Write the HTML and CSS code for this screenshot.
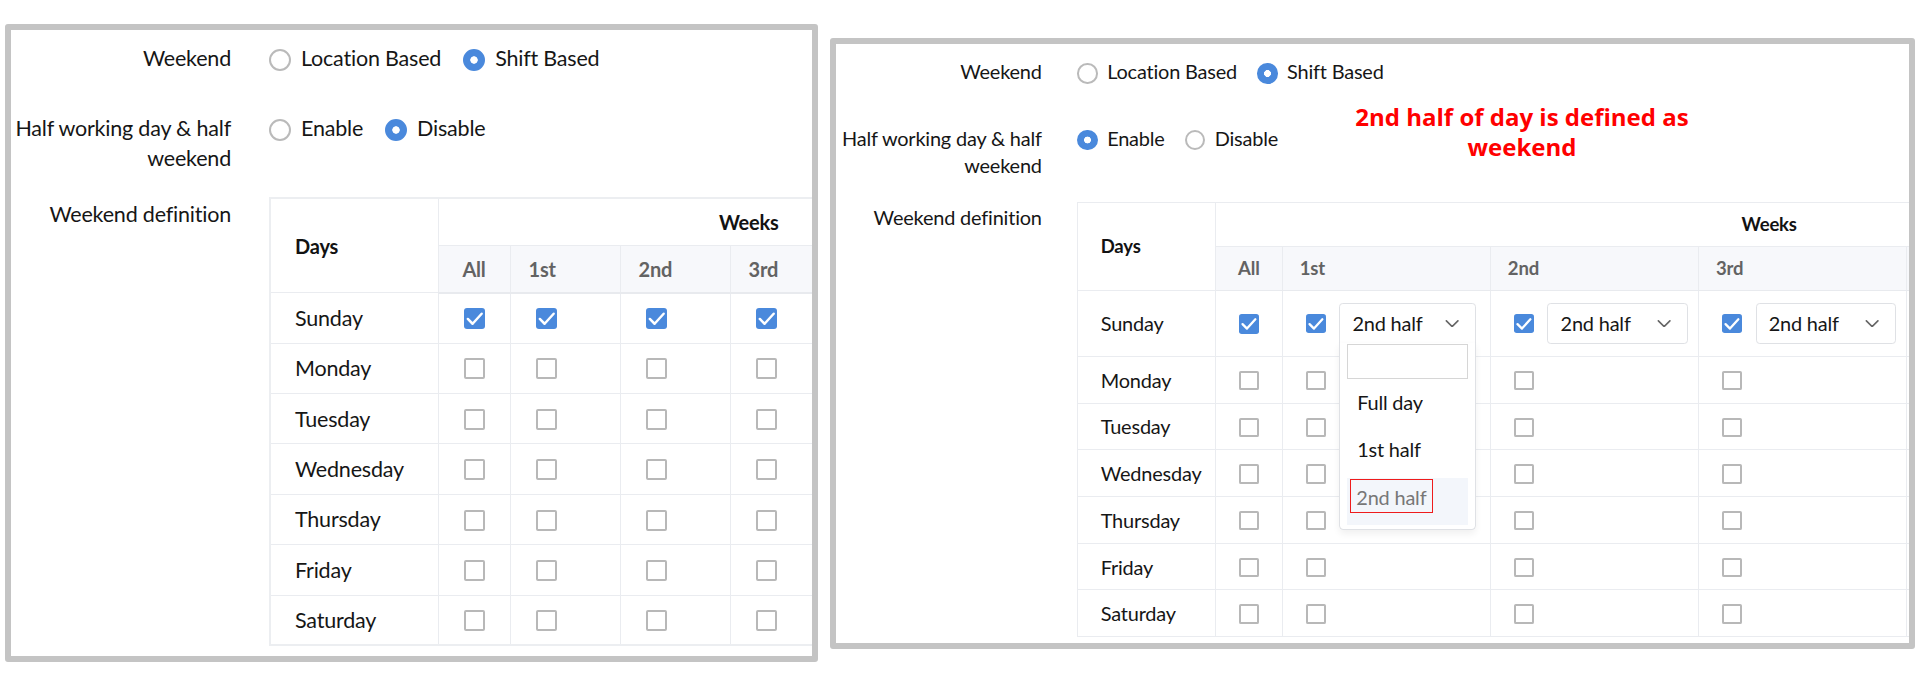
FILE: index.html
```html
<!DOCTYPE html>
<html lang="en">
<head>
<meta charset="utf-8">
<title>Weekend definition</title>
<link rel="stylesheet" href="styles.css">
</head>
<body>
<div class="stage">

  <section class="panel panel-a">
    <div class="content">
      <div class="form-row row-first">
        <div class="label">Weekend</div>
        <div class="field radios">
          <span class="radio"><span class="dot"></span>Location Based</span>
          <span class="radio on"><span class="dot"></span>Shift Based</span>
        </div>
      </div>
      <div class="form-row row-second">
        <div class="label">Half working day &amp; half weekend</div>
        <div class="field radios">
          <span class="radio"><span class="dot"></span>Enable</span>
          <span class="radio on"><span class="dot"></span>Disable</span>
        </div>
      </div>
      <div class="form-row row-third">
        <div class="label label-top">Weekend definition</div>
        <div class="field">
          <table class="grid">
            <colgroup><col class="c-day"><col class="c-all"><col class="c-wk" span="5"></colgroup>
            <thead>
              <tr class="h1"><th rowspan="2" class="days">Days</th><th colspan="6" class="weeks">Weeks</th></tr>
              <tr class="h2"><th class="all">All</th><th>1st</th><th>2nd</th><th>3rd</th><th>4th</th><th>5th</th></tr>
            </thead>
            <tbody>
              <tr><td class="day">Sunday</td>
                <td class="all"><span class="cb on"><svg viewBox="0 0 22 22"><path d="M4 11.5l5 5L18.5 6"/></svg></span></td>
                <td><span class="cb on"><svg viewBox="0 0 22 22"><path d="M4 11.5l5 5L18.5 6"/></svg></span></td>
                <td><span class="cb on"><svg viewBox="0 0 22 22"><path d="M4 11.5l5 5L18.5 6"/></svg></span></td>
                <td><span class="cb on"><svg viewBox="0 0 22 22"><path d="M4 11.5l5 5L18.5 6"/></svg></span></td>
                <td><span class="cb on"><svg viewBox="0 0 22 22"><path d="M4 11.5l5 5L18.5 6"/></svg></span></td>
                <td><span class="cb on"><svg viewBox="0 0 22 22"><path d="M4 11.5l5 5L18.5 6"/></svg></span></td></tr>
              <tr><td class="day">Monday</td><td class="all"><span class="cb"></span></td><td><span class="cb"></span></td><td><span class="cb"></span></td><td><span class="cb"></span></td><td><span class="cb"></span></td><td><span class="cb"></span></td></tr>
              <tr><td class="day">Tuesday</td><td class="all"><span class="cb"></span></td><td><span class="cb"></span></td><td><span class="cb"></span></td><td><span class="cb"></span></td><td><span class="cb"></span></td><td><span class="cb"></span></td></tr>
              <tr><td class="day">Wednesday</td><td class="all"><span class="cb"></span></td><td><span class="cb"></span></td><td><span class="cb"></span></td><td><span class="cb"></span></td><td><span class="cb"></span></td><td><span class="cb"></span></td></tr>
              <tr><td class="day">Thursday</td><td class="all"><span class="cb"></span></td><td><span class="cb"></span></td><td><span class="cb"></span></td><td><span class="cb"></span></td><td><span class="cb"></span></td><td><span class="cb"></span></td></tr>
              <tr><td class="day">Friday</td><td class="all"><span class="cb"></span></td><td><span class="cb"></span></td><td><span class="cb"></span></td><td><span class="cb"></span></td><td><span class="cb"></span></td><td><span class="cb"></span></td></tr>
              <tr><td class="day">Saturday</td><td class="all"><span class="cb"></span></td><td><span class="cb"></span></td><td><span class="cb"></span></td><td><span class="cb"></span></td><td><span class="cb"></span></td><td><span class="cb"></span></td></tr>
            </tbody>
          </table>
        </div>
      </div>
    </div>
  </section>

  <section class="panel panel-b">
    <div class="content">
      <div class="form-row row-first">
        <div class="label">Weekend</div>
        <div class="field radios">
          <span class="radio"><span class="dot"></span>Location Based</span>
          <span class="radio on"><span class="dot"></span>Shift Based</span>
        </div>
      </div>
      <div class="form-row row-second">
        <div class="label">Half working day &amp; half weekend</div>
        <div class="field radios">
          <span class="radio on"><span class="dot"></span>Enable</span>
          <span class="radio"><span class="dot"></span>Disable</span>
        </div>
      </div>
      <div class="form-row row-third">
        <div class="label label-top">Weekend definition</div>
        <div class="field">
          <table class="grid">
            <colgroup><col class="c-day"><col class="c-all"><col class="c-wk" span="5"></colgroup>
            <thead>
              <tr class="h1"><th rowspan="2" class="days">Days</th><th colspan="6" class="weeks">Weeks</th></tr>
              <tr class="h2"><th class="all">All</th><th>1st</th><th>2nd</th><th>3rd</th><th>4th</th><th>5th</th></tr>
            </thead>
            <tbody>
              <tr class="r-sun"><td class="day">Sunday</td>
                <td class="all"><span class="cb on"><svg viewBox="0 0 22 22"><path d="M4 11.5l5 5L18.5 6"/></svg></span></td>
                <td><div class="pick"><span class="cb on"><svg viewBox="0 0 22 22"><path d="M4 11.5l5 5L18.5 6"/></svg></span>
                  <div class="select open"><span class="val">2nd half</span><svg class="chev" viewBox="0 0 16 9"><path d="M1 1l7 7 7-7"/></svg>
                    <div class="menu">
                      <div class="search"></div>
                      <div class="opt">Full day</div>
                      <div class="opt">1st half</div>
                      <div class="opt active"><span class="mark">2nd half</span></div>
                    </div>
                  </div></div></td>
                <td><div class="pick"><span class="cb on"><svg viewBox="0 0 22 22"><path d="M4 11.5l5 5L18.5 6"/></svg></span>
                  <div class="select"><span class="val">2nd half</span><svg class="chev" viewBox="0 0 16 9"><path d="M1 1l7 7 7-7"/></svg></div></div></td>
                <td><div class="pick"><span class="cb on"><svg viewBox="0 0 22 22"><path d="M4 11.5l5 5L18.5 6"/></svg></span>
                  <div class="select"><span class="val">2nd half</span><svg class="chev" viewBox="0 0 16 9"><path d="M1 1l7 7 7-7"/></svg></div></div></td>
                <td><div class="pick"><span class="cb on"><svg viewBox="0 0 22 22"><path d="M4 11.5l5 5L18.5 6"/></svg></span>
                  <div class="select"><span class="val">2nd half</span><svg class="chev" viewBox="0 0 16 9"><path d="M1 1l7 7 7-7"/></svg></div></div></td>
                <td><div class="pick"><span class="cb on"><svg viewBox="0 0 22 22"><path d="M4 11.5l5 5L18.5 6"/></svg></span>
                  <div class="select"><span class="val">2nd half</span><svg class="chev" viewBox="0 0 16 9"><path d="M1 1l7 7 7-7"/></svg></div></div></td></tr>
              <tr><td class="day">Monday</td><td class="all"><span class="cb"></span></td><td><span class="cb"></span></td><td><span class="cb"></span></td><td><span class="cb"></span></td><td><span class="cb"></span></td><td><span class="cb"></span></td></tr>
              <tr><td class="day">Tuesday</td><td class="all"><span class="cb"></span></td><td><span class="cb"></span></td><td><span class="cb"></span></td><td><span class="cb"></span></td><td><span class="cb"></span></td><td><span class="cb"></span></td></tr>
              <tr><td class="day">Wednesday</td><td class="all"><span class="cb"></span></td><td><span class="cb"></span></td><td><span class="cb"></span></td><td><span class="cb"></span></td><td><span class="cb"></span></td><td><span class="cb"></span></td></tr>
              <tr><td class="day">Thursday</td><td class="all"><span class="cb"></span></td><td><span class="cb"></span></td><td><span class="cb"></span></td><td><span class="cb"></span></td><td><span class="cb"></span></td><td><span class="cb"></span></td></tr>
              <tr><td class="day">Friday</td><td class="all"><span class="cb"></span></td><td><span class="cb"></span></td><td><span class="cb"></span></td><td><span class="cb"></span></td><td><span class="cb"></span></td><td><span class="cb"></span></td></tr>
              <tr><td class="day">Saturday</td><td class="all"><span class="cb"></span></td><td><span class="cb"></span></td><td><span class="cb"></span></td><td><span class="cb"></span></td><td><span class="cb"></span></td><td><span class="cb"></span></td></tr>
            </tbody>
          </table>
        </div>
      </div>
    </div>
    <p class="note">2nd half of day is defined as<br>weekend</p>
  </section>

</div>
</body>
</html>
```

FILE: styles.css
```css
* { box-sizing: border-box; }

html, body {
  margin: 0;
  background: #fff;
}

body {
  font-family: Lato, "Noto Sans", sans-serif;
  color: #161616;
  letter-spacing: -0.2px;
}

.stage {
  display: flex;
  align-items: flex-start;
  width: 1920px;
  height: 684px;
  padding: 24px 0 0 5px;
}

/* ---------- framed screenshot panels ---------- */
.panel {
  position: relative;
  flex: none;
  overflow: hidden;
  background: #fff;
  border: 6px solid #c4c4c4;
  border-radius: 3px;
}

.panel-a {
  width: 813px;
  height: 638px;
}

.panel-b {
  width: 1085px;
  height: 611px;
  margin: 14px 0 0 12px;
}

.panel-a .content {
  padding-top: 13.4px;
}

.panel-b .content {
  zoom: 0.927;
  padding: 15.3px 0 0 2px;
}

/* ---------- form rows ---------- */
.form-row {
  display: flex;
  align-items: flex-start;
}

.label {
  flex: none;
  width: 220px;
  text-align: right;
  font-size: 21.5px;
  line-height: 30px;
}

.panel-b .label { line-height: 29px; }

.label-top { padding-top: 2px; }

.field {
  flex: none;
  margin-left: 38px;
}

.panel-b .field { margin-left: 38.5px; }

.row-first { margin-bottom: 40px; }
.panel-b .row-first { margin-bottom: 41.9px; }

.row-second { margin-bottom: 23.9px; }
.panel-b .row-second { margin-bottom: 25.2px; }

/* ---------- radios ---------- */
.radios {
  display: flex;
  align-items: center;
  height: 30px;
}

.radio {
  display: flex;
  align-items: center;
  margin-right: 22px;
  font-size: 21.5px;
  line-height: 30px;
}

.dot {
  flex: none;
  width: 22px;
  height: 22px;
  margin: 3px 10px 0 0;
  border: 2px solid #bababa;
  border-radius: 50%;
  background: #fff;
}

.panel-b .dot { border-width: 2.2px; }

.radio.on .dot {
  border-color: #4a89dc;
  background: radial-gradient(circle, #fff 0 3.4px, #4a89dc 4px);
}

/* ---------- table ---------- */
.grid {
  border-collapse: collapse;
  table-layout: fixed;
  width: 790px;
  border: 2px solid #eceef1;
}

.panel-b .grid { width: 1343.5px; }

.c-day { width: 168px; }
.c-all { width: 72px; }
.c-wk  { width: 110px; }

.panel-b .c-day { width: 148px; }
.panel-b .c-all { width: 72.7px; }
.panel-b .c-wk  { width: 224.5px; }

.grid th,
.grid td {
  border: 1px solid #eaecf0;
  padding: 0 0 0 18px;
  text-align: left;
  vertical-align: middle;
  white-space: nowrap;
}

.grid th {
  font-size: 20px;
  font-weight: 700;
}

.h1 th { height: 47px; }
.h2 th { height: 47.4px; }
.panel-b .h1 th { height: 47.5px; }
.panel-b .h2 th { height: 47.1px; }

.grid th.days {
  padding-left: 24px;
  color: #121212;
  background: #fff;
}

.grid th.weeks {
  padding: 0;
  text-align: center;
  color: #121212;
}

.h2 th {
  color: #636363;
  background: #f7f8fb;
  border-bottom: 2px solid #e8eaee;
}

.grid .all {
  padding: 0;
  text-align: center;
}

.grid tbody tr { height: 50.4px; }
.grid tbody tr.r-sun { height: 71.5px; }

.grid td.day {
  padding-left: 24px;
  font-size: 21.5px;
}

/* ---------- checkboxes ---------- */
.cb {
  display: inline-block;
  width: 21px;
  height: 21px;
  margin-left: 7px;
  vertical-align: middle;
  border: 2px solid #b8b8b8;
  border-radius: 2px;
  background: #fff;
}

.panel-b .cb { border-width: 2.2px; }

.grid .all .cb { margin-left: 0; }

.cb.on,
.panel-b .cb.on {
  border: 0;
  border-radius: 3px;
  background: #4a89dc;
}

.cb svg {
  display: block;
  width: 21px;
  height: 21px;
}

.cb svg path {
  fill: none;
  stroke: #fff;
  stroke-width: 2.6;
  stroke-linecap: round;
  stroke-linejoin: round;
}

/* ---------- select with dropdown ---------- */
.pick {
  display: flex;
  align-items: center;
}

.pick .cb { flex: none; }

.select {
  position: relative;
  display: flex;
  align-items: center;
  justify-content: space-between;
  width: 152px;
  height: 44.8px;
  margin-left: 14.8px;
  padding: 0 17px 0 13px;
  border: 1px solid #dfe1e5;
  border-radius: 4px;
  background: #fff;
  font-size: 21.5px;
}

.select.open {
  width: 147px;
  border-radius: 4px 4px 0 0;
}

.chev {
  width: 15.4px;
  height: 8px;
}

.chev path {
  fill: none;
  stroke: #666;
  stroke-width: 2;
  stroke-linecap: round;
  stroke-linejoin: round;
}

.menu {
  position: absolute;
  z-index: 2;
  top: 100%;
  left: -1px;
  right: -1px;
  height: 201.8px;
  padding: 0 7.2px;
  border: 1px solid #dfe1e5;
  border-top: 0;
  border-radius: 0 0 5px 5px;
  background: #fff;
  box-shadow: 0 4px 8px rgba(0, 0, 0, 0.06);
}

.search {
  height: 37.8px;
  margin-top: 1px;
  border: 2px solid #d6d6d6;
  background: #fff;
}

.search + .opt { margin-top: 5.8px; }

.opt {
  height: 50.4px;
  padding: 5.5px 0 0 10.8px;
  font-size: 21.5px;
  line-height: 30px;
  color: #161616;
}

.opt.active {
  padding: 1.7px 0 0 2.9px;
  background: #f3f6fb;
  color: #777;
}

.mark {
  display: block;
  width: 89.5px;
  height: 36.7px;
  padding: 4px 0 0 5.9px;
  border: 2px solid #ee1c1c;
}

/* ---------- annotation ---------- */
.note {
  position: absolute;
  top: 58px;
  left: 486px;
  width: 400px;
  margin: 0;
  text-align: center;
  font-family: "Open Sans", sans-serif;
  font-weight: 700;
  font-size: 24px;
  line-height: 30px;
  letter-spacing: 0;
  color: #f00;
}
```
